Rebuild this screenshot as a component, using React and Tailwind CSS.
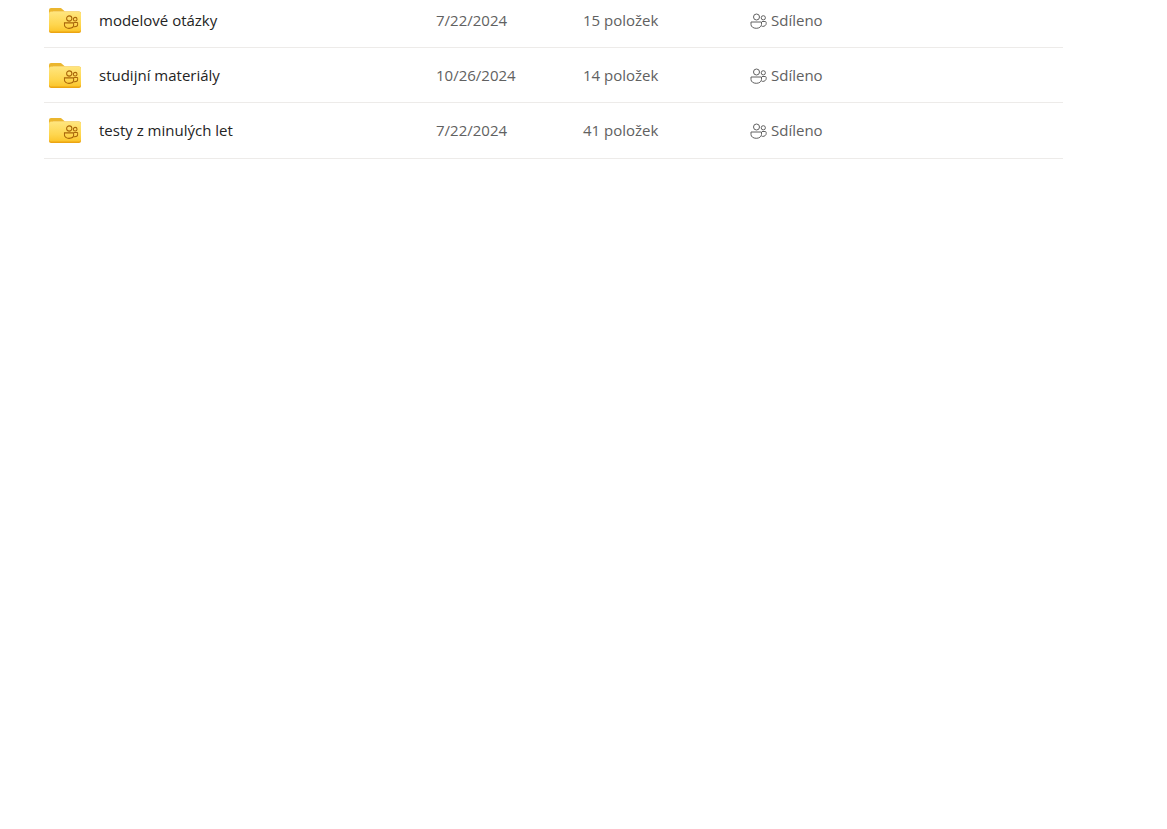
const rows = [
    { name: "modelové otázky", date: "7/22/2024", count: "15 položek" },
    { name: "studijní materiály", date: "10/26/2024", count: "14 položek" },
    { name: "testy z minulých let", date: "7/22/2024", count: "41 položek" },
];

const PeopleIcon = ({ className, strokeWidth = 1 }) => (
    <svg viewBox="0 0 17 16" fill="none" stroke="currentColor" strokeWidth={strokeWidth} className={className}>
        <circle cx="6.5" cy="4" r="3" />
        <circle cx="13.3" cy="4.8" r="2.1" />
        <path d="M1 9h10.500v2.500c0 2.200-2.300 3.800-5.250 3.800S1 13.700 1 11.500z" />
        <path d="M12 8.500h3.200c.5 0 1 .4 1 1v1c0 1.700-1.500 2.900-3.500 2.900-.3 0-.6 0-.9-.1" />
    </svg>
);

const FolderIcon = () => (
    <svg viewBox="0 0 32 25" className="w-8 h-[25px] shrink-0">
        <defs>
            <linearGradient id="folderBody" x1="0" y1="0" x2="0" y2="1">
                <stop offset="0" stopColor="#ffe67f" />
                <stop offset="0.65" stopColor="#fed64f" />
                <stop offset="1" stopColor="#fbc52c" />
            </linearGradient>
        </defs>
        <path d="M0 2a2 2 0 0 1 2-2h9c1 0 1.600.5 2.400 1.200L16 3.500H4v3H0z" fill="#ebb62e" />
        <rect x="0" y="3.500" width="32" height="21.500" rx="2" fill="#eca512" />
        <rect x="0" y="3.500" width="32" height="20" rx="2" fill="url(#folderBody)" />
        <g transform="translate(14.500 7)" className="text-[#a9650a]">
            <PeopleIcon className="w-[15px] h-[14px]" strokeWidth={1.2} />
        </g>
    </svg>
);

const App = () => {
    return (
        <div className="min-h-screen bg-white overflow-hidden font-['Open_Sans','Noto_Sans',sans-serif] text-[15px]">
            <div className="w-[1019px] ml-[44px] -mt-[7px]">
                {rows.map((row) => (
                    <div key={row.name} className="h-[55px] last:h-[56px] pt-[15px] border-b border-[#edebe9]">
                        <div className="flex items-center h-[25px]">
                            <div className="w-[55px] pl-[5px] flex items-center">
                                <FolderIcon />
                            </div>
                            <div className="w-[337px] text-[#242424]">{row.name}</div>
                            <div className="w-[147px] text-[#616161]">{row.date}</div>
                            <div className="w-[168px] text-[#616161]">{row.count}</div>
                            <div className="flex items-center gap-[4px] -ml-[1px] text-[#616161]">
                                <PeopleIcon className="w-[17px] h-4" />
                                <span>Sdíleno</span>
                            </div>
                        </div>
                    </div>
                ))}
            </div>
        </div>
    );
};

export default App;
